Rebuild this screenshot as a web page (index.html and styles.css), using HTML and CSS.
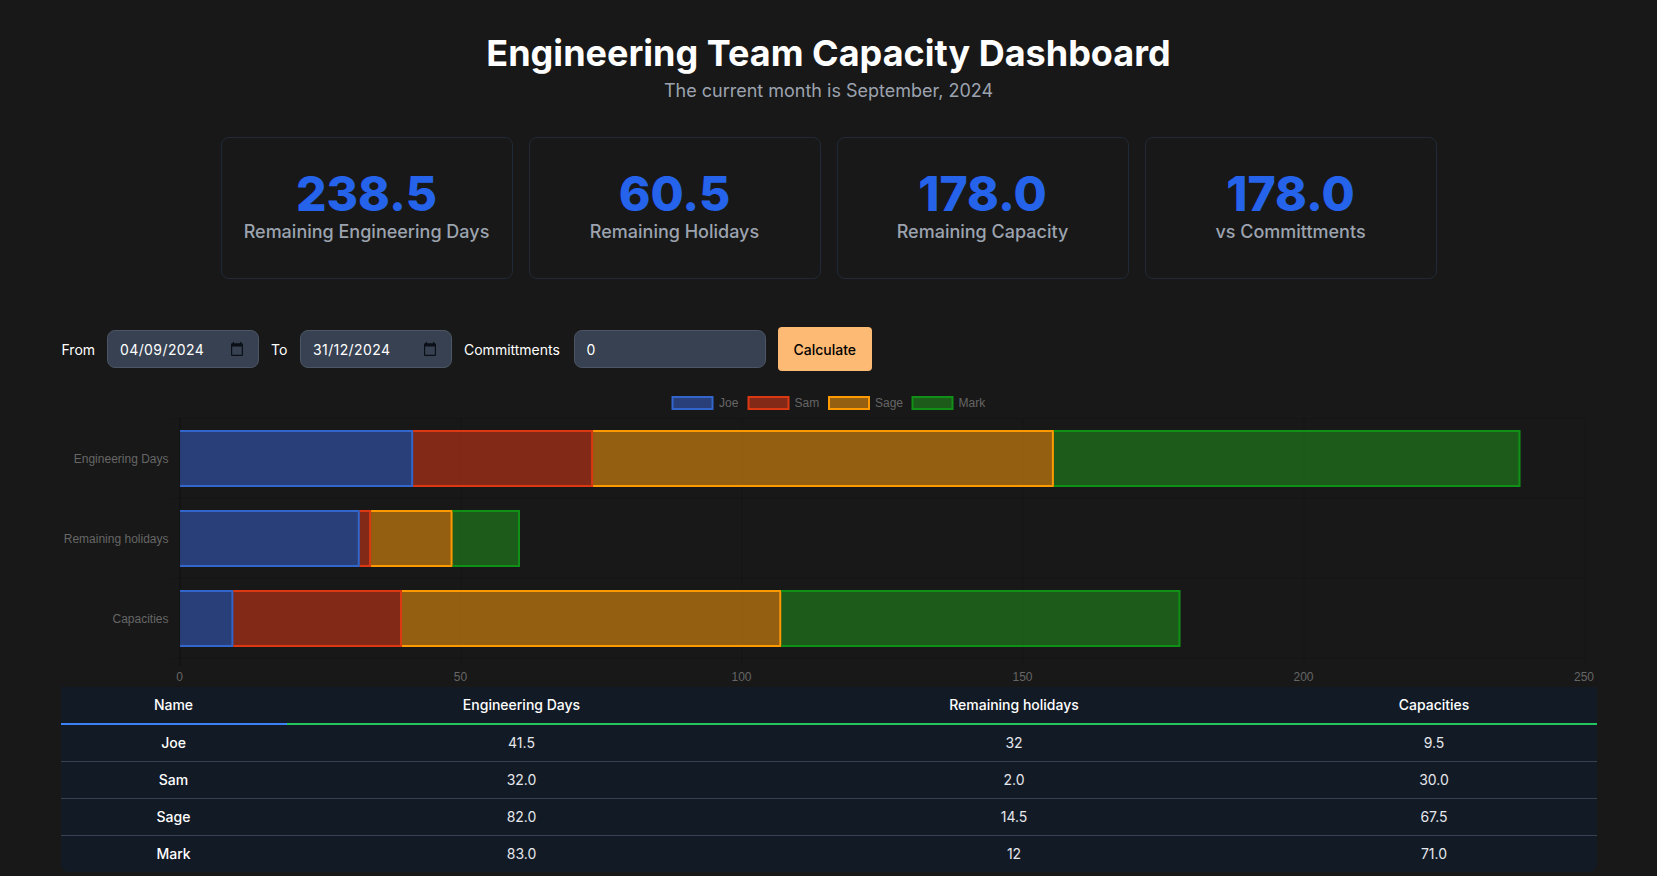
FILE: index.html
```html
<!DOCTYPE html>
<html lang="en">
<head>
    <meta charset="UTF-8">
    <meta name="viewport" content="width=device-width, initial-scale=1.0">
    <title>Engineering Team Capacity Dashboard</title>
    <link rel="stylesheet" href="styles.css">
</head>
<body>

<header class="page-header">
    <h1>Engineering Team Capacity Dashboard</h1>
    <p>The current month is September, 2024</p>
</header>

<section class="stats">
    <div class="stat">
        <div class="stat-value">238.5</div>
        <div class="stat-label">Remaining Engineering Days</div>
    </div>
    <div class="stat">
        <div class="stat-value">60.5</div>
        <div class="stat-label">Remaining Holidays</div>
    </div>
    <div class="stat">
        <div class="stat-value">178.0</div>
        <div class="stat-label">Remaining Capacity</div>
    </div>
    <div class="stat">
        <div class="stat-value">178.0</div>
        <div class="stat-label">vs Committments</div>
    </div>
</section>

<main class="content">
    <form class="filters">
        <label for="fromDate" class="from-label">From</label>
        <div class="field date-field">
            <input type="text" id="fromDate" value="04/09/2024">
            <svg class="calendar" viewBox="2 1 20 22" preserveAspectRatio="none"><path d="M20 3h-1V1h-2v2H7V1H5v2H4c-1.100 0-2 .9-2 2v16c0 1.100.9 2 2 2h16c1.100 0 2-.9 2-2V5c0-1.100-.9-2-2-2zm0 18H4V8h16v13z"/></svg>
        </div>
        <label for="toDate" class="to-label">To</label>
        <div class="field date-field">
            <input type="text" id="toDate" value="31/12/2024">
            <svg class="calendar" viewBox="2 1 20 22" preserveAspectRatio="none"><path d="M20 3h-1V1h-2v2H7V1H5v2H4c-1.100 0-2 .9-2 2v16c0 1.100.9 2 2 2h16c1.100 0 2-.9 2-2V5c0-1.100-.9-2-2-2zm0 18H4V8h16v13z"/></svg>
        </div>
        <label for="commitments" class="commit-label">Committments</label>
        <div class="field number-field">
            <input type="text" id="commitments" value="0">
        </div>
        <button type="button" class="calculate">Calculate</button>
    </form>

    <svg class="chart" viewBox="60.5 375 1536 312" width="1536" height="312">
        <!-- legend -->
        <rect class="joe-fill" x="672" y="397" width="40" height="12"/>
        <rect class="joe-line" x="672" y="397" width="40" height="12"/>
        <text class="chart-text" x="718.500" y="407">Joe</text>
        <rect class="sam-fill" x="748" y="397" width="40" height="12"/>
        <rect class="sam-line" x="748" y="397" width="40" height="12"/>
        <text class="chart-text" x="794" y="407">Sam</text>
        <rect class="sage-fill" x="828.500" y="397" width="40" height="12"/>
        <rect class="sage-line" x="828.500" y="397" width="40" height="12"/>
        <text class="chart-text" x="874.500" y="407">Sage</text>
        <rect class="mark-fill" x="912" y="397" width="40" height="12"/>
        <rect class="mark-line" x="912" y="397" width="40" height="12"/>
        <text class="chart-text" x="958" y="407">Mark</text>

        <!-- grid -->
        <path class="grid" d="M171 418.500H1584.500M171 498.500H1584.500M171 578.500H1584.500M171 658.500H1584.500"/>
        <path class="grid" d="M460.500 418.500V666M741.500 418.500V666M1022.500 418.500V666M1303.500 418.500V666M1584.500 418.500V666"/>
        <path class="axis" d="M179.500 418.500V666"/>

        <!-- Engineering Days -->
        <rect class="joe-fill" x="179.500" y="430" width="233.200" height="57"/>
        <path class="joe-line" d="M179.500 431H411.700V486H179.500"/>
        <rect class="sam-fill" x="412.700" y="430" width="179.900" height="57"/>
        <path class="sam-line" d="M412.700 431H591.600V486H412.700"/>
        <rect class="sage-fill" x="592.600" y="430" width="460.800" height="57"/>
        <path class="sage-line" d="M592.600 431H1052.400V486H592.600"/>
        <rect class="mark-fill" x="1053.400" y="430" width="466.500" height="57"/>
        <path class="mark-line" d="M1053.400 431H1518.900V486H1053.400"/>

        <!-- Remaining holidays -->
        <rect class="joe-fill" x="179.500" y="510" width="179.800" height="57"/>
        <path class="joe-line" d="M179.500 511H358.300V566H179.500"/>
        <rect class="sam-fill" x="359.300" y="510" width="11.300" height="57"/>
        <path class="sam-line" d="M359.300 511H369.600V566H359.300"/>
        <rect class="sage-fill" x="370.600" y="510" width="81.500" height="57"/>
        <path class="sage-line" d="M370.600 511H451.100V566H370.600"/>
        <rect class="mark-fill" x="452.100" y="510" width="67.400" height="57"/>
        <path class="mark-line" d="M452.100 511H518.500V566H452.100"/>

        <!-- Capacities -->
        <rect class="joe-fill" x="179.500" y="590" width="53.400" height="57"/>
        <path class="joe-line" d="M179.500 591H231.900V646H179.500"/>
        <rect class="sam-fill" x="232.900" y="590" width="168.600" height="57"/>
        <path class="sam-line" d="M232.900 591H400.500V646H232.900"/>
        <rect class="sage-fill" x="401.500" y="590" width="379.300" height="57"/>
        <path class="sage-line" d="M401.500 591H779.800V646H401.500"/>
        <rect class="mark-fill" x="780.800" y="590" width="399.100" height="57"/>
        <path class="mark-line" d="M780.800 591H1178.900V646H780.800"/>

        <!-- axis labels -->
        <text class="chart-text end" x="168" y="463">Engineering Days</text>
        <text class="chart-text end" x="168" y="543">Remaining holidays</text>
        <text class="chart-text end" x="168" y="623">Capacities</text>
        <text class="chart-text mid" x="179" y="681">0</text>
        <text class="chart-text mid" x="460" y="681">50</text>
        <text class="chart-text mid" x="741" y="681">100</text>
        <text class="chart-text mid" x="1022" y="681">150</text>
        <text class="chart-text mid" x="1303" y="681">200</text>
        <text class="chart-text mid" x="1583.500" y="681">250</text>
    </svg>

    <table class="capacity-table">
        <thead>
            <tr>
                <th class="name-col">Name</th>
                <th class="days-col">Engineering Days</th>
                <th class="holidays-col">Remaining holidays</th>
                <th>Capacities</th>
            </tr>
        </thead>
        <tbody>
            <tr><th>Joe</th><td>41.5</td><td>32</td><td>9.5</td></tr>
            <tr><th>Sam</th><td>32.0</td><td>2.0</td><td>30.0</td></tr>
            <tr><th>Sage</th><td>82.0</td><td>14.5</td><td>67.5</td></tr>
            <tr><th>Mark</th><td>83.0</td><td>12</td><td>71.0</td></tr>
        </tbody>
    </table>
</main>

</body>
</html>
```

FILE: styles.css
```css
html, body {
    height: 100%;
    overflow: hidden;
}

body {
    margin: 0;
    background-color: #181818;
    color: #fff;
    font-family: "Inter", "Liberation Sans", sans-serif;
}

.page-header {
    padding-top: 33px;
    text-align: center;
}

.page-header h1 {
    margin: 0;
    font-size: 36px;
    line-height: 40px;
    font-weight: 700;
}

.page-header p {
    margin: 4px 0 0;
    font-size: 18px;
    line-height: 28px;
    color: #9ca3af;
}

.stats {
    width: 1216px;
    margin: 32px auto 0;
    display: grid;
    grid-template-columns: repeat(4, 1fr);
    gap: 16px;
}

.stat {
    padding: 32px 0;
    border: 1px solid #1f2937;
    border-radius: 8px;
    text-align: center;
}

.stat-value {
    font-size: 48px;
    line-height: 48px;
    font-weight: 800;
    color: #2563eb;
}

.stat-label {
    font-size: 18px;
    line-height: 28px;
    font-weight: 500;
    color: #9ca3af;
}

.content {
    width: 1536px;
    margin: 0 auto;
}

.filters {
    margin-top: 48px;
    height: 44px;
    display: flex;
    align-items: center;
    gap: 12px;
    font-size: 14px;
    font-weight: 400;
}

.from-label {
    width: 33.5px;
    padding-left: 1px;
}

.to-label {
    width: 17px;
}

.commit-label {
    width: 97.5px;
    white-space: nowrap;
}

.field {
    height: 38px;
    box-sizing: border-box;
    display: flex;
    align-items: center;
    padding: 0 12px;
    background-color: #374151;
    border: 1px solid #4b5563;
    border-radius: 8px;
}

.field input {
    flex: 1;
    min-width: 0;
    padding: 0;
    border: 0;
    outline: 0;
    background: none;
    color: #fff;
    font: 400 14px "Inter", "Liberation Sans", sans-serif;
}

.date-field input {
    letter-spacing: 0.4px;
}

.date-field {
    width: 152px;
}

.number-field {
    width: 192px;
}

.calendar {
    width: 12px;
    height: 14px;
    margin-right: 3px;
    fill: #0b0f18;
}

.calculate {
    height: 44px;
    padding: 0 16px;
    border: 0;
    border-radius: 4px;
    background-color: #fdba74;
    color: #000;
    font: 500 14px "Inter", "Liberation Sans", sans-serif;
}

.chart {
    display: block;
    margin-top: 4px;
}

.chart-text {
    font: 12px "Liberation Sans", sans-serif;
    fill: #666;
}

.end {
    text-anchor: end;
}

.mid {
    text-anchor: middle;
}

.grid {
    stroke: rgba(0, 0, 0, 0.1);
    fill: none;
}

.axis {
    stroke: rgba(0, 0, 0, 0.4);
    fill: none;
}

.joe-fill {
    fill: rgba(55, 97, 202, 0.55);
}

.sam-fill {
    fill: rgba(220, 57, 26, 0.55);
}

.sage-fill {
    fill: rgba(253, 155, 15, 0.55);
}

.mark-fill {
    fill: rgba(35, 148, 29, 0.55);
}

.joe-line, .sam-line, .sage-line, .mark-line {
    fill: none;
    stroke-width: 2;
}

.joe-line {
    stroke: #3366cc;
}

.sam-line {
    stroke: #dc3912;
}

.sage-line {
    stroke: #ff9900;
}

.mark-line {
    stroke: #109016;
}

.capacity-table {
    width: 100%;
    table-layout: fixed;
    border-collapse: separate;
    border-spacing: 0;
    background-color: #121a26;
    border-radius: 0 0 8px 8px;
    font-size: 14px;
    text-align: center;
}

.capacity-table th, .capacity-table td {
    height: 35px;
    padding: 0 0 1px;
    border-bottom: 1px solid #374151;
}

.capacity-table th {
    font-weight: 500;
    color: #fff;
}

.capacity-table td {
    color: #e5e7eb;
}

.capacity-table thead th {
    border-bottom: 2px solid #22c55e;
}

.capacity-table thead .name-col {
    width: 226px;
    border-bottom-color: #3b82f6;
}

.capacity-table thead .days-col {
    width: 470px;
}

.capacity-table thead .holidays-col {
    width: 515px;
}

.capacity-table tbody tr:last-child th, .capacity-table tbody tr:last-child td {
    border-bottom: 0;
}
```
